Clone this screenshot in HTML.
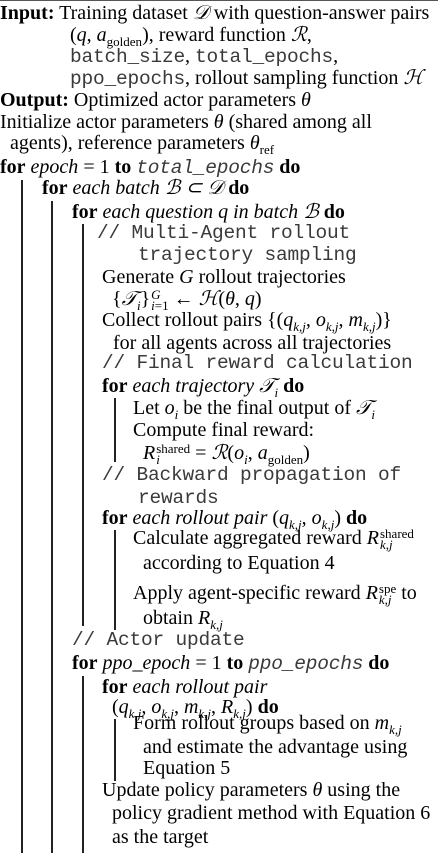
<!DOCTYPE html><html><head><meta charset="utf-8"><style>
body{margin:0;width:438px;height:853px;background:#fff;position:relative;overflow:hidden;font-family:"Liberation Serif",serif;font-size:20px;color:#000}
.l{position:absolute;white-space:nowrap;line-height:22px}
.m{font-family:"Liberation Mono",monospace;font-size:19.5px;color:#3a3a3a;letter-spacing:-0.2px}
i{font-style:italic}
sub,sup{font-size:13px;line-height:0}
.ss{display:inline-flex;flex-direction:column;vertical-align:middle;font-size:13px;line-height:11px;margin-left:1px}
.ss i{font-size:13px}
.b{position:absolute;width:1.5px;background:#222}
</style></head><body>
<div style="position:absolute;top:0;left:0;width:438px;height:1px;background:#555"></div>
<div class="l" style="top:2px;left:0"><b>Input:</b> Training dataset <i>𝒟</i> with question-answer pairs</div>
<div class="l" style="top:24px;left:70px">(<i>q</i>, <i>a</i><sub>golden</sub>), reward function <i>ℛ</i>,</div>
<div class="l" style="top:45px;left:70px"><span class="m">batch_size</span>, <span class="m">total_epochs</span>,</div>
<div class="l" style="top:67px;left:70px"><span class="m">ppo_epochs</span>, rollout sampling function <i>ℋ</i></div>
<div class="l" style="top:89px;left:0"><b>Output:</b> Optimized actor parameters <i>θ</i></div>
<div class="l" style="top:111px;left:0">Initialize actor parameters <i>θ</i> (shared among all</div>
<div class="l" style="top:132px;left:10px">agents), reference parameters <i>θ</i><sub>ref</sub></div>
<div class="l" style="top:156px;left:0"><b>for</b> <i>epoch</i> = 1 <b>to</b> <i class="m">total_epochs</i> <b>do</b></div>
<div class="l" style="top:177px;left:42px"><b>for</b> <i>each batch ℬ ⊂ 𝒟</i> <b>do</b></div>
<div class="l" style="top:201px;left:72px"><b>for</b> <i>each question q in batch ℬ</i> <b>do</b></div>
<div class="l m" style="top:222px;left:97px">// Multi-Agent rollout</div>
<div class="l m" style="top:244px;left:138px">trajectory sampling</div>
<div class="l" style="top:266px;left:102px">Generate <i>G</i> rollout trajectories</div>
<div class="l" style="top:288px;left:112px">{<i>𝒯<sub>i</sub></i>}<span class="ss"><i>G</i><span><i>i</i>=1</span></span> ← <i>ℋ</i>(<i>θ</i>, <i>q</i>)</div>
<div class="l" style="top:309px;left:102px">Collect rollout pairs {(<i>q<sub>k,j</sub></i>, <i>o<sub>k,j</sub></i>, <i>m<sub>k,j</sub></i>)}</div>
<div class="l" style="top:332px;left:113px">for all agents across all trajectories</div>
<div class="l m" style="top:352px;left:102px">// Final reward calculation</div>
<div class="l" style="top:375px;left:102px"><b>for</b> <i>each trajectory 𝒯<sub>i</sub></i> <b>do</b></div>
<div class="l" style="top:397px;left:133px">Let <i>o<sub>i</sub></i> be the final output of <i>𝒯<sub>i</sub></i></div>
<div class="l" style="top:419px;left:133px">Compute final reward:</div>
<div class="l" style="top:442px;left:143px"><i>R</i><span class="ss"><span>shared</span><i>i</i></span> = <i>ℛ</i>(<i>o<sub>i</sub></i>, <i>a</i><sub>golden</sub>)</div>
<div class="l m" style="top:464px;left:102px">// Backward propagation of</div>
<div class="l m" style="top:487px;left:138px">rewards</div>
<div class="l" style="top:507px;left:102px"><b>for</b> <i>each rollout pair</i> (<i>q<sub>k,j</sub></i>, <i>o<sub>k,j</sub></i>) <b>do</b></div>
<div class="l" style="top:527px;left:133px">Calculate aggregated reward <i>R</i><span class="ss"><span>shared</span><i>k,j</i></span></div>
<div class="l" style="top:552px;left:143px">according to Equation 4</div>
<div class="l" style="top:582px;left:133px">Apply agent-specific reward <i>R</i><span class="ss"><span>spe</span><i>k,j</i></span> to</div>
<div class="l" style="top:607px;left:143px">obtain <i>R<sub>k,j</sub></i></div>
<div class="l m" style="top:629px;left:72px">// Actor update</div>
<div class="l" style="top:652px;left:72px"><b>for</b> <i>ppo_epoch</i> = 1 <b>to</b> <i class="m">ppo_epochs</i> <b>do</b></div>
<div class="l" style="top:676px;left:102px"><b>for</b> <i>each rollout pair</i></div>
<div class="l" style="top:696px;left:112px">(<i>q<sub>k,j</sub></i>, <i>o<sub>k,j</sub></i>, <i>m<sub>k,j</sub></i>, <i>R<sub>k,j</sub></i>) <b>do</b></div>
<div class="l" style="top:712px;left:133px">Form rollout groups based on <i>m<sub>k,j</sub></i></div>
<div class="l" style="top:736px;left:143px">and estimate the advantage using</div>
<div class="l" style="top:757px;left:143px">Equation 5</div>
<div class="l" style="top:779px;left:102px">Update policy parameters <i>θ</i> using the</div>
<div class="l" style="top:802px;left:112px">policy gradient method with Equation 6</div>
<div class="l" style="top:826px;left:112px">as the target</div>
<div class="b" style="left:21px;top:180px;height:673px"></div>
<div class="b" style="left:51px;top:201px;height:652px"></div>
<div class="b" style="left:82px;top:224px;height:402px"></div>
<div class="b" style="left:82px;top:676px;height:177px"></div>
<div class="b" style="left:114px;top:398px;height:64px"></div>
<div class="b" style="left:114px;top:530px;height:100px"></div>
<div class="b" style="left:114px;top:719px;height:62px"></div>
</body></html>
